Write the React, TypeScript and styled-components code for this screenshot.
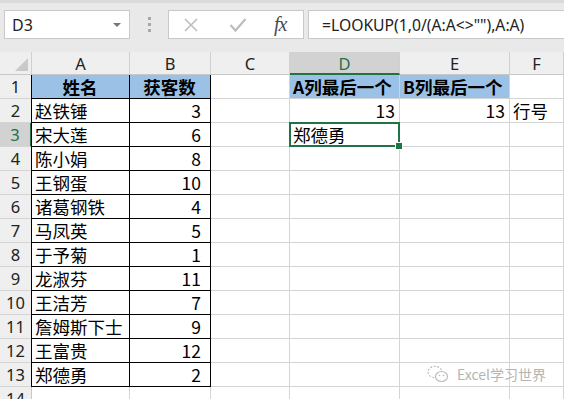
import React from "react";
import styled, { createGlobalStyle, css } from "styled-components";

const GlobalStyle = createGlobalStyle`
  html, body { margin: 0; padding: 0; background: #fff; }
  body { overflow: hidden; }
`;

const Page = styled.div`
  position: relative;
  width: 564px;
  height: 399px;
  overflow: hidden;
  display: flex;
  flex-direction: column;
  background: #fff;
  font-family: "Noto Sans", "Noto Sans CJK SC", sans-serif;
`;

const FormulaBar = styled.div`
  height: 52px;
  flex: none;
  box-sizing: border-box;
  background: #e9e9e9;
  border-top: 3px solid #dadada;
  display: flex;
  align-items: flex-start;
  padding-top: 7px;
  padding-left: 4px;
`;

const Box = styled.div`
  box-sizing: border-box;
  height: 29px;
  background: #fff;
  border: 1px solid #c9c9c9;
  display: flex;
  align-items: center;
`;

const NameBox = styled(Box)`
  width: 126px;
  padding: 0 8px 0 7px;
  justify-content: space-between;
  font-size: 16px;
  color: #222;
`;

const Caret = styled.span`
  width: 0;
  height: 0;
  border-left: 4px solid transparent;
  border-right: 4px solid transparent;
  border-top: 4px solid #777;
`;

const Dots = styled.div`
  width: 38px;
  height: 29px;
  display: flex;
  flex-direction: column;
  align-items: center;
  justify-content: center;
  gap: 3px;
  & > span {
    width: 3px;
    height: 3px;
    background: #a8a8a8;
  }
`;

const FxBox = styled(Box)`
  width: 136px;
  padding-left: 14px;
  gap: 30px;
`;

const FxLabel = styled.span`
  font-family: "Liberation Serif", serif;
  font-style: italic;
  font-size: 20px;
  color: #4a4a4a;
  letter-spacing: -1px;
  margin-left: -3px;
`;

const FormulaInput = styled(Box)`
  flex: 1;
  margin-left: 4px;
  margin-right: -4px;
  padding-left: 13px;
  font-size: 15.7px;
  color: #222;
  white-space: nowrap;
`;

const Sheet = styled.div`
  display: grid;
  grid-template-columns: 32px 98px 81px 79px 110px 110px 1fr;
  grid-template-rows: 23px;
  grid-auto-rows: 24px;
`;

const HeadCell = styled.div<{ $sel?: boolean }>`
  box-sizing: border-box;
  background: ${(p) => (p.$sel ? "#d2d2d2" : "#efefef")};
  border-right: 1px solid #d0d0d0;
  border-bottom: ${(p) => (p.$sel ? "2px solid #217346" : "1px solid #c8c8c8")};
  color: ${(p) => (p.$sel ? "#217346" : "#222")};
  font-size: 16.5px;
  display: flex;
  align-items: center;
  justify-content: center;
  padding-top: ${(p) => (p.$sel ? "1px" : "0")};
`;

const Corner = styled(HeadCell)`
  position: relative;
  &::after {
    content: "";
    position: absolute;
    right: 3px;
    bottom: 3px;
    width: 0;
    height: 0;
    border-left: 13px solid transparent;
    border-bottom: 13px solid #c9c9c9;
  }
`;

const RowHead = styled.div<{ $sel?: boolean }>`
  box-sizing: border-box;
  background: ${(p) => (p.$sel ? "#d2d2d2" : "#efefef")};
  border-right: ${(p) => (p.$sel ? "2px solid #217346" : "1px solid #c8c8c8")};
  border-bottom: 1px solid #d4d4d4;
  color: ${(p) => (p.$sel ? "#217346" : "#222")};
  font-size: 16.5px;
  display: flex;
  align-items: center;
  justify-content: center;
`;

type Align = "left" | "right" | "center";

const Cell = styled.div<{
  $align?: Align;
  $fill?: boolean;
  $boxed?: boolean;
  $first?: boolean;
  $bold?: boolean;
  $pr?: number;
  $active?: boolean;
}>`
  position: relative;
  box-sizing: border-box;
  border-right: 1px solid #d4d4d4;
  border-bottom: 1px solid #d4d4d4;
  background: ${(p) => (p.$fill ? "#9bc2e6" : "#fff")};
  font-family: "Noto Sans CJK SC", "Noto Sans", sans-serif;
  font-size: 17.5px;
  font-weight: ${(p) => (p.$bold ? 700 : 400)};
  color: #000;
  white-space: nowrap;
  display: flex;
  align-items: center;
  justify-content: ${(p) =>
    p.$align === "right" ? "flex-end" : p.$align === "center" ? "center" : "flex-start"};
  padding: 0 ${(p) => p.$pr ?? 4}px 0 3px;
  ${(p) =>
    p.$boxed &&
    css`
      border-right-color: #000;
      border-bottom-color: #000;
    `}
  ${(p) =>
    p.$first &&
    css`
      box-shadow: -1px 0 0 #000;
    `}
  ${(p) =>
    p.$active &&
    css`
      &::after {
        content: "";
        position: absolute;
        left: -1px;
        top: -1px;
        right: -1px;
        bottom: -1px;
        border: 2px solid #217346;
        pointer-events: none;
      }
      &::before {
        content: "";
        position: absolute;
        right: -4px;
        bottom: -4px;
        width: 6px;
        height: 6px;
        background: #217346;
        border: 1px solid #fff;
        z-index: 2;
      }
    `}
`;

const Watermark = styled.div`
  position: absolute;
  left: 427px;
  top: 364px;
  display: flex;
  align-items: center;
  gap: 8px;
  color: #b4b4b4;
  font-family: "Noto Sans CJK SC", "Noto Sans", sans-serif;
  font-size: 14px;
`;

const names = [
  "赵铁锤",
  "宋大莲",
  "陈小娟",
  "王钢蛋",
  "诸葛钢铁",
  "马凤英",
  "于予菊",
  "龙淑芬",
  "王洁芳",
  "詹姆斯下士",
  "王富贵",
  "郑德勇",
];
const counts = [3, 6, 8, 10, 4, 5, 1, 11, 7, 9, 12, 2];

const cols = ["A", "B", "C", "D", "E", "F"];

const XIcon = () => (
  <svg width="16" height="16" viewBox="0 0 16 16">
    <path d="M2 2 L14 14 M14 2 L2 14" stroke="#bdbdbd" strokeWidth="1.6" fill="none" />
  </svg>
);

const CheckIcon = () => (
  <svg width="18" height="16" viewBox="0 0 18 16">
    <path d="M1.5 8 L6.5 13.5 L16.5 2" stroke="#bdbdbd" strokeWidth="2.2" fill="none" />
  </svg>
);

const WeChat = () => (
  <svg width="22" height="18" viewBox="0 0 22 18">
    <ellipse cx="8" cy="7" rx="7" ry="5.6" fill="none" stroke="#bbb" strokeWidth="1.1" strokeDasharray="2 1.5" />
    <ellipse cx="14.5" cy="11.5" rx="6" ry="5" fill="#fff" stroke="#bbb" strokeWidth="1.1" />
    <circle cx="12.5" cy="10.5" r="0.8" fill="#bbb" />
    <circle cx="16.5" cy="10.5" r="0.8" fill="#bbb" />
  </svg>
);

export default function App() {
  const rows: React.ReactNode[] = [];
  rows.push(
    <React.Fragment key="r1">
      <RowHead>1</RowHead>
      <Cell $fill $boxed $first $bold $align="center">姓名</Cell>
      <Cell $fill $boxed $bold $align="center">获客数</Cell>
      <Cell />
      <Cell $fill $bold>A列最后一个</Cell>
      <Cell $fill $bold>B列最后一个</Cell>
      <Cell />
    </React.Fragment>
  );
  for (let i = 0; i < names.length; i++) {
    const r = i + 2;
    rows.push(
      <React.Fragment key={`r${r}`}>
        <RowHead $sel={r === 3}>{r}</RowHead>
        <Cell $boxed $first>{names[i]}</Cell>
        <Cell $boxed $align="right" $pr={9}>{counts[i]}</Cell>
        <Cell />
        {r === 2 ? (
          <Cell $align="right">13</Cell>
        ) : r === 3 ? (
          <Cell $active>郑德勇</Cell>
        ) : (
          <Cell />
        )}
        {r === 2 ? <Cell $align="right">13</Cell> : <Cell />}
        {r === 2 ? <Cell>行号</Cell> : <Cell />}
      </React.Fragment>
    );
  }
  rows.push(
    <React.Fragment key="r14">
      <RowHead>14</RowHead>
      <Cell />
      <Cell />
      <Cell />
      <Cell />
      <Cell />
      <Cell />
    </React.Fragment>
  );

  return (
    <Page>
      <GlobalStyle />
      <FormulaBar>
        <NameBox>
          <span>D3</span>
          <Caret />
        </NameBox>
        <Dots>
          <span />
          <span />
          <span />
        </Dots>
        <FxBox>
          <XIcon />
          <CheckIcon />
          <FxLabel>fx</FxLabel>
        </FxBox>
        <FormulaInput>=LOOKUP(1,0/(A:A&lt;&gt;""),A:A)</FormulaInput>
      </FormulaBar>
      <Sheet>
        <Corner />
        {cols.map((c) => (
          <HeadCell key={c} $sel={c === "D"}>
            {c}
          </HeadCell>
        ))}
        {rows}
      </Sheet>
      <Watermark>
        <WeChat />
        <span>Excel学习世界</span>
      </Watermark>
    </Page>
  );
}
